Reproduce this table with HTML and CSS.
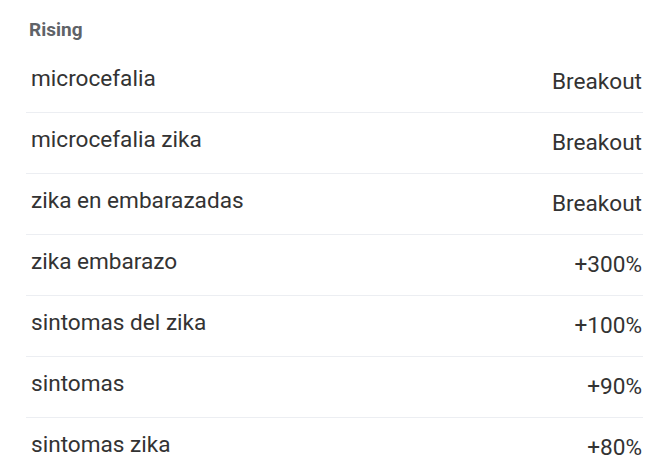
FILE: index.html
```html
<!DOCTYPE html>
<html>
<head>
<meta charset="utf-8">
<link rel="stylesheet" href="styles.css">
</head>
<body>
<div class="panel">
  <div class="title">Rising</div>
  <div class="list">
    <div class="row"><span class="term">microcefalia</span><span class="value">Breakout</span></div>
    <div class="row"><span class="term">microcefalia zika</span><span class="value">Breakout</span></div>
    <div class="row"><span class="term">zika en embarazadas</span><span class="value">Breakout</span></div>
    <div class="row"><span class="term">zika embarazo</span><span class="value">+300%</span></div>
    <div class="row"><span class="term">sintomas del zika</span><span class="value">+100%</span></div>
    <div class="row"><span class="term">sintomas</span><span class="value">+90%</span></div>
    <div class="row"><span class="term">sintomas zika</span><span class="value">+80%</span></div>
  </div>
</div>
</body>
</html>
```
FILE: styles.css
```css
html, body {
  margin: 0;
  padding: 0;
  background: #ffffff;
  overflow: hidden;
}
body {
  font-family: Roboto, "Liberation Sans", sans-serif;
  color: #333333;
}
.panel {
  width: 617px;
  padding-left: 26px;
  padding-top: 18px;
}
.title {
  font-size: 19px;
  font-weight: 700;
  line-height: 24px;
  color: #5f6368;
  padding-left: 3px;
  margin-bottom: 10px;
}
.row {
  display: flex;
  justify-content: space-between;
  align-items: flex-start;
  height: 60px;
  border-bottom: 1px solid #eceef2;
  padding: 0 1px 0 5px;
  font-size: 22.6px;
  line-height: 26px;
}
.term {
  padding-top: 14px;
}
.value {
  padding-top: 17px;
}
```
